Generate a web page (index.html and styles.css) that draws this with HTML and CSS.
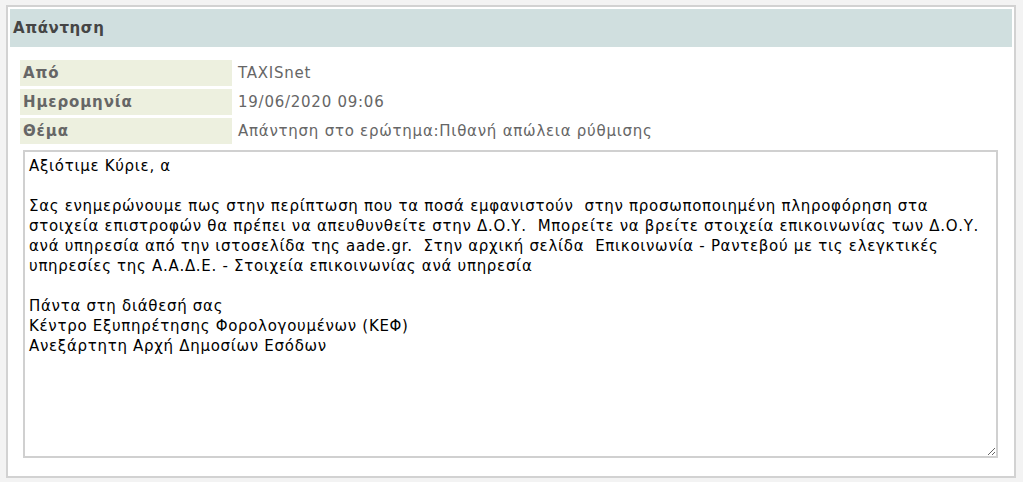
FILE: index.html
```html
<!DOCTYPE html>
<html lang="el">
<head>
    <meta charset="UTF-8">
    <meta name="viewport" content="width=device-width, initial-scale=1.0">
    <title>Απάντηση</title>
    <link rel="stylesheet" href="styles.css">
</head>
<body>
    <div class="panel">
        <div class="panel-header">Απάντηση</div>
        <div class="panel-body">
            <table class="info">
                <tr>
                    <td class="label">Από</td>
                    <td class="value">TAXISnet</td>
                </tr>
                <tr>
                    <td class="label">Ημερομηνία</td>
                    <td class="value">19/06/2020 09:06</td>
                </tr>
                <tr>
                    <td class="label">Θέμα</td>
                    <td class="value">Απάντηση στο ερώτημα:Πιθανή απώλεια ρύθμισης</td>
                </tr>
            </table>
            <textarea class="message" readonly>Αξιότιμε Κύριε, α

Σας ενημερώνουμε πως στην περίπτωση που τα ποσά εμφανιστούν  στην προσωποποιημένη πληροφόρηση στα
στοιχεία επιστροφών θα πρέπει να απευθυνθείτε στην Δ.Ο.Υ.  Μπορείτε να βρείτε στοιχεία επικοινωνίας των Δ.Ο.Υ.
ανά υπηρεσία από την ιστοσελίδα της aade.gr.  Στην αρχική σελίδα  Επικοινωνία - Ραντεβού με τις ελεγκτικές
υπηρεσίες της Α.Α.Δ.Ε. - Στοιχεία επικοινωνίας ανά υπηρεσία

Πάντα στη διάθεσή σας
Κέντρο Εξυπηρέτησης Φορολογουμένων (ΚΕΦ)
Ανεξάρτητη Αρχή Δημοσίων Εσόδων</textarea>
        </div>
    </div>
</body>
</html>
```

FILE: styles.css
```css
body {
    margin: 0;
    background: #f3f3f3;
    font-family: Verdana, "DejaVu Sans", sans-serif;
    font-size: 15px;
}
.panel {
    margin: 5px 0 0 6px;
    padding: 2px;
    box-sizing: content-box;
    width: 1002px;
    height: 465px;
    border: 2px solid #d2d2d2;
    background: #fff;
}
.panel-header {
    height: 38px;
    line-height: 38px;
    padding-left: 3px;
    background-color: #d0dfdf;
    color: #454545;
    font-weight: bold;
    font-size: 15px;
    letter-spacing: 0.6px;
}
.panel-body {
    padding: 10px 14px 0 7px;
}
.info {
    border-spacing: 3px;
    border-collapse: separate;
}
.info td {
    height: 26px;
    padding: 0 3px;
    color: #666;
    letter-spacing: 0.75px;
}
.info .label {
    width: 206px;
    background-color: #edf0df;
    font-weight: bold;
    letter-spacing: 0.85px;
}
.message {
    display: block;
    box-sizing: border-box;
    width: 975px;
    height: 308px;
    margin: 3px 0 0 6px;
    padding: 4px 2px 4px 4px;
    border: 2px solid #d0d0d0;
    font-family: Verdana, "DejaVu Sans", sans-serif;
    font-size: 15px;
    letter-spacing: 0.7px;
    line-height: 20px;
    color: #000;
    background: #fff;
    outline: none;
}
```
